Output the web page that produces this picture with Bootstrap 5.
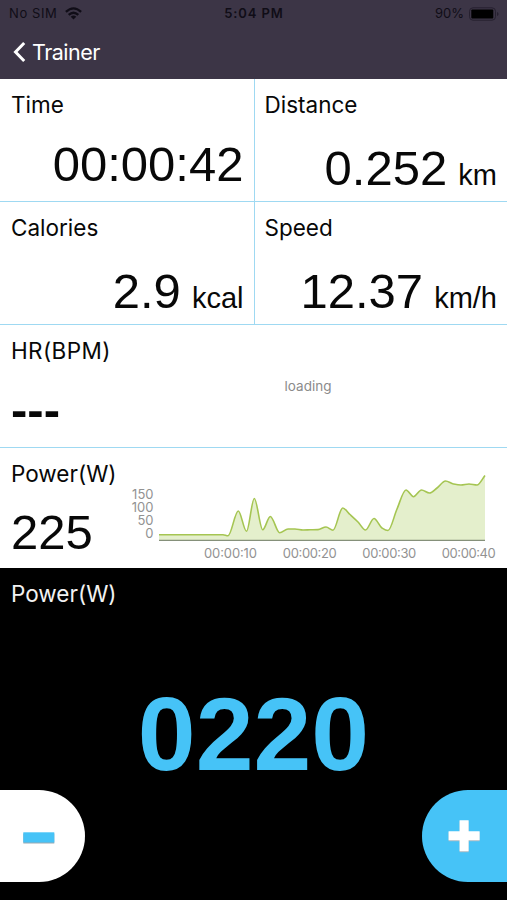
<!DOCTYPE html>
<html lang="en">
<head>
<meta charset="utf-8">
<meta name="viewport" content="width=device-width, initial-scale=1">
<title>Trainer</title>
<link rel="stylesheet" href="https://cdn.jsdelivr.net/npm/bootstrap@5.3.0/dist/css/bootstrap.min.css">
<style>
body{font-family:Inter,Roboto,sans-serif;background:#000;color:#080808}
.app{width:507px;height:900px;overflow:hidden}
.topbar{background:#3c3546;height:79px}
.status{height:27px;font-size:13px;line-height:27px;color:#100d17;padding:0 8px 0 9px}
.status .side{flex:1 1 0}
.clock{font-weight:600;letter-spacing:.9px}
.carrier{letter-spacing:.6px}
.back{height:50px;padding-left:13px;gap:6px;color:#fff;font-size:21.5px;line-height:50px;letter-spacing:-.5px}
.cell{height:123px;padding:14px 10px 0 11px;border-bottom:1px solid #9fd9f2;background:#fff}
.cell-split{border-left:1px solid #9fd9f2;padding-left:10px}
.tag{font-size:22.5px;line-height:24px;white-space:nowrap}
.tag-hr{letter-spacing:.4px}
.value{font-family:"Liberation Sans",Arial,sans-serif;font-size:49px;line-height:50px;white-space:nowrap;word-spacing:-2.5px}
.unit{font-size:29px}
.drop-a{margin-top:22px}.drop-b{margin-top:26px}.drop-c{margin-top:21px}
.loading-note{font-size:13.5px;color:#8b8b8b;padding-top:37px;line-height:20px;width:378px}
.power-cell{height:120px;border-bottom:0;padding-right:0}
.chart text{font-size:13px;fill:#929292}
.target{height:332px;padding-top:14px;color:#f2f2f2;background:#000}
.target .tag{padding-left:11px}
.big{font-family:"Liberation Sans",Arial,sans-serif;font-weight:700;font-size:104px;line-height:104px;color:#46c3f7;margin-top:76px}
.steps{margin-bottom:18px}
.step{width:85px;height:92px;border:0;padding:0}
.minus{background:#fff;border-radius:0 46px 46px 0}
.plus{background:#46c3f7;border-radius:46px 0 0 46px}
</style>
</head>
<body>
<div class="app d-flex flex-column">
  <header class="topbar flex-shrink-0">
    <div class="status d-flex align-items-center">
      <div class="side d-flex align-items-center gap-2"><span class="carrier">No SIM</span>
        <svg width="17" height="13" viewBox="0 0 17 13"><g fill="none" stroke="#100d17" stroke-width="2.3"><path d="M.9 4.9Q8.5-2.2 16.1 4.9"/><path d="M3.7 7.9Q8.5 3.5 13.3 7.9"/></g><path d="M5.7 9.7Q8.5 7.5 11.3 9.7L8.5 12.6Z" fill="#100d17"/></svg>
      </div>
      <span class="clock">5:04 PM</span>
      <div class="side d-flex align-items-center justify-content-end"><span class="me-1">90%</span>
        <svg width="31" height="14" viewBox="0 0 31 14"><rect x="1.5" y=".8" width="26" height="12.4" rx="3.5" fill="none" stroke="#26202f"/><rect x="3.3" y="2.6" width="22" height="8.8" rx="1" fill="#000"/><path d="M29 5v4q1.6-.5 1.6-2T29 5" fill="#26202f"/></svg>
      </div>
    </div>
    <div class="back d-flex align-items-center">
      <svg width="13" height="22" viewBox="0 0 13 22"><path d="M11.2 2 2.5 11 11.2 20" fill="none" stroke="#fff" stroke-width="3"/></svg>
      <span>Trainer</span>
    </div>
  </header>
  <main>
    <div class="row g-0">
      <section class="col-6 cell"><div class="tag">Time</div><div class="value text-end drop-a">00:00:42</div></section>
      <section class="col-6 cell cell-split"><div class="tag">Distance</div><div class="value text-end drop-b">0.252 <span class="unit">km</span></div></section>
      <section class="col-6 cell"><div class="tag">Calories</div><div class="value text-end drop-b">2.9 <span class="unit">kcal</span></div></section>
      <section class="col-6 cell cell-split"><div class="tag">Speed</div><div class="value text-end drop-b">12.37 <span class="unit">km/h</span></div></section>
    </div>
    <section class="cell d-flex justify-content-between">
      <div><div class="tag tag-hr">HR(BPM)</div><div class="value fw-bold drop-a">---</div></div>
      <div class="loading-note text-center">loading</div>
    </section>
    <section class="cell power-cell d-flex">
      <div><div class="tag">Power(W)</div><div class="value drop-c">225</div></div>
      <svg class="chart ms-auto flex-shrink-0" width="382" height="100" viewBox="125 462 382 100">
        <path id="area" fill="#e4efcc"/><path id="curve" fill="none" stroke="#a5c552" stroke-width="1.6"/>
        <path d="M159 540.3H485" stroke="#85907a" stroke-width="1.2"/>
        <g text-anchor="end"><text x="153.5" y="498.5">150</text><text x="153.5" y="511.8">100</text><text x="153.5" y="525">50</text><text x="153.5" y="538.2">0</text></g>
        <g><text x="204" y="557.6" textLength="53">00:00:10</text><text x="282.8" y="557.6" textLength="54">00:00:20</text><text x="362.3" y="557.6" textLength="54">00:00:30</text><text x="441.8" y="557.6" textLength="54">00:00:40</text></g>
      </svg>
    </section>
    <section class="target d-flex flex-column">
      <div class="tag">Power(W)</div>
      <div class="big text-center">0220</div>
      <div class="steps d-flex justify-content-between mt-auto">
        <button class="step minus" aria-label="Decrease"><svg class="d-block" width="85" height="92"><rect x="23.3" y="43.5" width="31" height="10" fill="#9aa9b2"/><rect x="23.3" y="42.3" width="31" height="10.2" fill="#46c3f7"/></svg></button>
        <button class="step plus" aria-label="Increase"><svg class="d-block" width="85" height="92"><path d="M37.6 31h9v11h11v9.3h-11v11h-9v-11h-11V42h11z" fill="#a9b9c2"/><path d="M37.6 30.3h9v11h11v9h-11v11h-9v-11h-11v-9h11z" fill="#fff"/></svg></button>
      </div>
    </section>
  </main>
</div>
<script src="https://cdn.jsdelivr.net/npm/bootstrap@5.3.0/dist/js/bootstrap.bundle.min.js"></script>
<script>
// Power samples drawn as a smooth monotone curve
const p=[[159,534.7],[167,534.7],[215,534.7],[223,534.7],[228,535.8],[238.3,511],[246.5,531.3],[254.3,498.5],[262.7,529.7],[270.3,516.5],[279.7,532.8],[288,529],[295,529],[303,530],[310,529.8],[318,529.6],[326,527],[333,530.2],[342.7,508],[350,514.5],[358,522],[365.5,530],[374,518.5],[382,528],[388,530.5],[397,509],[406,490],[413.5,496.7],[421.5,490],[429.5,493],[437,488],[445.5,481],[453.5,484],[461,485],[469,484],[477,485],[485,475.5]];
const s=p.slice(1).map((b,i)=>(b[1]-p[i][1])/(b[0]-p[i][0]));
const m=p.map((_,i)=>i===0?s[0]:i===p.length-1?s[i-1]:s[i-1]*s[i]<=0?0:2*s[i-1]*s[i]/(s[i-1]+s[i]));
let d='M'+p[0];
for(let i=1;i<p.length;i++){const a=p[i-1],b=p[i],h=(b[0]-a[0])/3;d+=`C${a[0]+h} ${a[1]+m[i-1]*h} ${b[0]-h} ${b[1]-m[i]*h} ${b[0]} ${b[1]}`}
document.getElementById('curve').setAttribute('d',d);
document.getElementById('area').setAttribute('d',d+'V540H159Z');
</script>
</body>
</html>
